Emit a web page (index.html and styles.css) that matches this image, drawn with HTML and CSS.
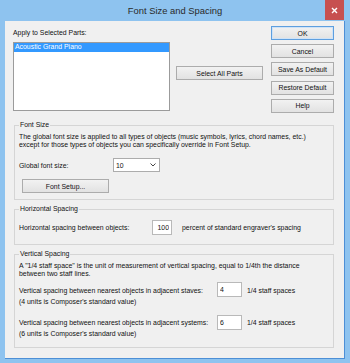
FILE: index.html
```html
<!DOCTYPE html>
<html lang="en">
<head>
<meta charset="UTF-8">
<meta name="viewport" content="width=device-width, initial-scale=1.0">
<link rel="stylesheet" href="styles.css">
</head>
<body>
<div class="window">
    <div class="titlebar">
        <span class="title">Font Size and Spacing</span>
        <span class="close">
            <svg width="7" height="7" viewBox="0 0 7 7"><path d="M1 1 L6 6 M6 1 L1 6" stroke="#fff" stroke-width="1.4"/></svg>
        </span>
    </div>

    <div class="client">
        <div class="top">
            <div class="parts">
                <div class="caption">Apply to Selected Parts:</div>
                <div class="listbox">
                    <div class="item selected">Acoustic Grand Piano</div>
                </div>
            </div>
            <button class="btn select-all">Select All Parts</button>
            <div class="actions">
                <button class="btn default">OK</button>
                <button class="btn">Cancel</button>
                <button class="btn">Save As Default</button>
                <button class="btn">Restore Default</button>
                <button class="btn">Help</button>
            </div>
        </div>

        <fieldset class="group font-size">
            <legend>Font Size</legend>
            <div class="desc">The global font size is applied to all types of objects (music symbols, lyrics, chord names, etc.)<br>except for those types of objects you can specifically override in Font Setup.</div>
            <div class="row global">
                <span class="label">Global font size:</span>
                <div class="dropdown">
                    <span>10</span>
                    <svg width="6" height="4" viewBox="0 0 6 4"><path d="M0.5 0.5 L3 3 L5.5 0.5" fill="none" stroke="#444" stroke-width="1"/></svg>
                </div>
            </div>
            <button class="btn font-setup">Font Setup...</button>
        </fieldset>

        <fieldset class="group horizontal">
            <legend>Horizontal Spacing</legend>
            <div class="row hrow">
                <span class="label">Horizontal spacing between objects:</span>
                <input class="edit right" type="text" value="100">
                <span>percent of standard engraver's spacing</span>
            </div>
        </fieldset>

        <fieldset class="group vertical">
            <legend>Vertical Spacing</legend>
            <div class="desc">A "1/4 staff space" is the unit of measurement of vertical spacing, equal to 1/4th the distance<br>between two staff lines.</div>
            <div class="row vrow">
                <span class="label two">Vertical spacing between nearest objects in adjacent staves:<br>(4 units is Composer's standard value)</span>
                <input class="edit" type="text" value="4">
                <span class="unit">1/4 staff spaces</span>
            </div>
            <div class="row vrow second">
                <span class="label two">Vertical spacing between nearest objects in adjacent systems:<br>(6 units is Composer's standard value)</span>
                <input class="edit" type="text" value="6">
                <span class="unit">1/4 staff spaces</span>
            </div>
        </fieldset>
    </div>
</div>
</body>
</html>
```

FILE: styles.css
```css
* {
    box-sizing: border-box;
}
body {
    margin: 0;
    font-family: "Liberation Sans", Arial, sans-serif;
    font-size: 6.9px;
    color: #111;
}
.window {
    width: 350px;
    height: 363px;
    background: #8ec3ef;
}

/* title bar */
.titlebar {
    height: 21px;
    display: grid;
    grid-template-columns: 1fr auto 1fr;
    align-items: start;
}
.title {
    grid-column: 2;
    font-size: 9.4px;
    line-height: 21px;
    color: #2a2a2a;
}
.close {
    grid-column: 3;
    justify-self: end;
    margin-right: 6px;
    width: 19px;
    height: 20px;
    background: #c75050;
    display: flex;
    align-items: center;
    justify-content: center;
}

/* dialog body */
.client {
    margin-left: 5px;
    width: 340px;
    height: 338px;
    background: #f0f0f0;
    border-right: 1px solid #4d8fd6;
    border-bottom: 1px solid #4d8fd6;
    padding: 5px 10px 0 8px;
}
.top {
    display: flex;
    align-items: flex-start;
    height: 87px;
}
.parts {
    width: 157px;
}
.caption {
    margin-top: 2.5px;
    line-height: 8px;
    white-space: nowrap;
}
.listbox {
    margin-top: 5.5px;
    height: 69px;
    border: 1px solid #9b9b9b;
    background: #fff;
}
.item {
    height: 8.5px;
    line-height: 8.5px;
    padding-left: 1px;
    white-space: nowrap;
}
.item.selected {
    background: #3399ff;
    color: #fff;
}

.btn {
    height: 14px;
    padding: 0;
    border: 1px solid #acacac;
    background: linear-gradient(#f2f2f2, #e2e2e2);
    font: inherit;
    color: #111;
    white-space: nowrap;
}
.btn.default {
    border-color: #5e9fdf;
    box-shadow: inset 0 0 0 1px #cfe3f7;
}
.select-all {
    margin: 40px 0 0 6px;
    width: 87px;
}
.actions {
    margin-left: 8px;
    width: 63px;
    display: flex;
    flex-direction: column;
    gap: 4.2px;
}

/* group boxes */
.group {
    margin: 8px 0 0 1px;
    border: 1px solid #d5d5d5;
    padding: 0 6px 0 4px;
}
.group legend {
    padding: 0 1px;
    line-height: 8px;
}
.desc {
    line-height: 8px;
    white-space: nowrap;
}
.row {
    display: flex;
    align-items: center;
    white-space: nowrap;
}

.font-size {
    padding-bottom: 6px;
}
.font-size .desc {
    margin-top: 3.5px;
}
.global {
    margin-top: 9.5px;
}
.global .label {
    width: 94px;
}
.dropdown {
    width: 47px;
    height: 14px;
    border: 1px solid #acacac;
    background: #fff;
    display: flex;
    align-items: center;
    justify-content: space-between;
    padding: 0 3px 0 2px;
}
.font-setup {
    display: block;
    margin: 7px 0 0 3px;
    width: 87px;
}

.edit {
    height: 15px;
    border: 1px solid #b9b9b9;
    background: #fff;
    padding: 0 2px;
    font: inherit;
    color: #111;
    outline: none;
}
.edit.right {
    text-align: right;
}

.horizontal {
    margin-top: 5px;
    padding-bottom: 9px;
}
.hrow {
    margin-top: 7px;
}
.hrow .label {
    width: 133px;
}
.hrow .edit {
    width: 20px;
    margin-right: 10px;
}

.vertical {
    margin-top: 5px;
    padding-bottom: 8px;
}
.vertical .desc {
    margin-top: 4px;
}
.vrow {
    margin-top: 4px;
    align-items: flex-start;
}
.vrow.second {
    margin-top: 8px;
}
.vrow .label {
    width: 198px;
    line-height: 11px;
    margin-top: 3px;
}
.vrow.second .label {
    margin-top: 2px;
}
.vrow .edit {
    width: 25px;
    margin-right: 5px;
}
.vrow .unit {
    line-height: 11px;
    margin-top: 3px;
}
.vrow.second .unit {
    margin-top: 2px;
}
```
